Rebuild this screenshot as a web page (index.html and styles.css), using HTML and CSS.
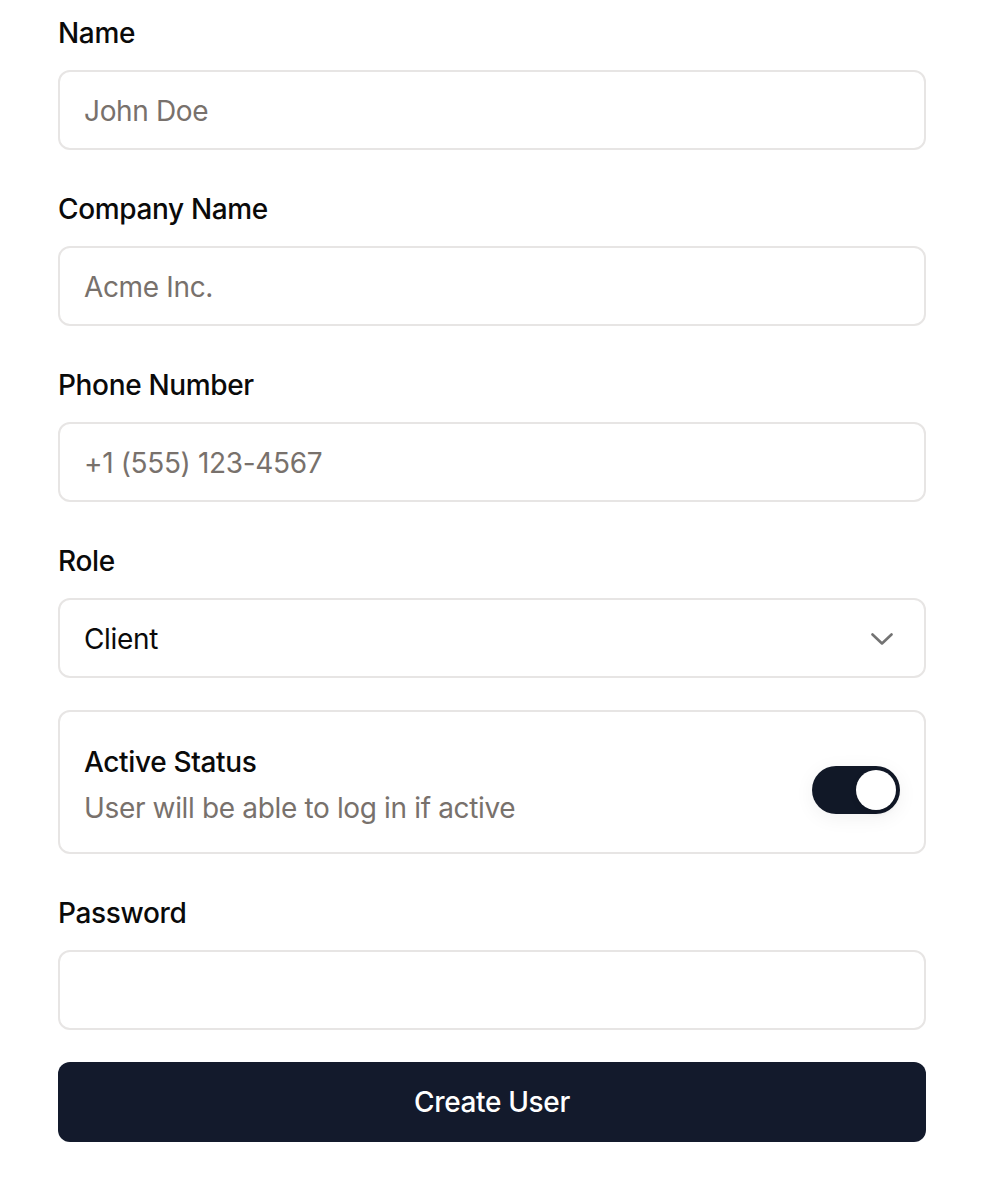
FILE: index.html
```html
<!DOCTYPE html>
<html lang="en">
<head>
<meta charset="utf-8">
<title>Create User</title>
<link rel="stylesheet" href="styles.css">
</head>
<body>
<form class="form">
  <div class="field">
    <label class="label">Name</label>
    <div class="input"><span class="placeholder">John Doe</span></div>
  </div>
  <div class="field">
    <label class="label">Company Name</label>
    <div class="input"><span class="placeholder">Acme Inc.</span></div>
  </div>
  <div class="field">
    <label class="label">Phone Number</label>
    <div class="input"><span class="placeholder">+1 (555) 123-4567</span></div>
  </div>
  <div class="field">
    <label class="label">Role</label>
    <div class="input select">
      <span class="value">Client</span>
      <svg class="chevron" width="22" height="12" viewBox="0 0 22 12" fill="none"><path d="M1.5 1.5 11 10.5l9.5-9" stroke="#737373" stroke-width="2.6" stroke-linecap="round" stroke-linejoin="round"/></svg>
    </div>
  </div>
  <div class="card">
    <div class="card-text">
      <div class="card-title">Active Status</div>
      <div class="card-desc">User will be able to log in if active</div>
    </div>
    <div class="switch"><div class="thumb"></div></div>
  </div>
  <div class="field">
    <label class="label">Password</label>
    <div class="input"></div>
  </div>
  <button type="button" class="button">Create User</button>
</form>
</body>
</html>
```
FILE: styles.css
```css
* { box-sizing: border-box; }
html, body { margin: 0; padding: 0; background: #ffffff; }
body {
  font-family: Inter, "Noto Sans", "Liberation Sans", sans-serif;
  font-size: 28px;
  letter-spacing: -0.35px;
  color: #0a0a0a;
}
.form {
  display: flex;
  flex-direction: column;
  gap: 32px;
  padding: 6px 60px 0 58px;
}
.field {
  display: flex;
  flex-direction: column;
  gap: 17px;
}
.label {
  display: block;
  padding-top: 7px;
  line-height: 40px;
  font-weight: 500;
  color: #0a0a0a;
}
.input {
  height: 80px;
  border: 2px solid #e7e5e4;
  border-radius: 12px;
  padding: 2px 24px 0 24px;
  display: flex;
  align-items: center;
  line-height: 40px;
}
.placeholder { color: #78716c; }
.value { color: #0a0a0a; }
.select { justify-content: space-between; padding-right: 31px; }
.chevron { display: block; margin-top: 0; }
.card {
  border: 2px solid #e7e5e4;
  border-radius: 12px;
  padding: 30px 24px 24px 24px;
  display: flex;
  align-items: center;
  justify-content: space-between;
}
.card-text { display: flex; flex-direction: column; gap: 6px; }
.card-title { line-height: 40px; font-weight: 500; }
.card-desc { line-height: 40px; color: #78716c; }
.switch {
  width: 88px;
  height: 48px;
  border-radius: 24px;
  background: #111827;
  margin-top: 10px;
  padding: 4px;
  display: flex;
  justify-content: flex-end;
  box-shadow: 0 4px 20px rgba(0,0,0,0.06);
}
.thumb {
  width: 40px;
  height: 40px;
  border-radius: 50%;
  background: #ffffff;
  box-shadow: 0 2px 6px rgba(0,0,0,0.12);
}
.button {
  height: 80px;
  border: none;
  border-radius: 12px;
  background: #131a2c;
  color: #ffffff;
  font-family: inherit;
  font-size: 28px;
  letter-spacing: -0.35px;
  font-weight: 500;
}
```
